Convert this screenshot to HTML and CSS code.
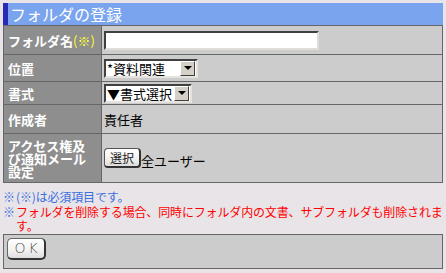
FILE: index.html
```html
<!DOCTYPE html>
<html lang="ja">
<head>
<meta charset="utf-8">
<link rel="stylesheet" href="styles.css">
</head>
<body>
<div class="page">
  <div class="title">フォルダの登録</div>
  <table class="form">
    <tr class="r1">
      <th>フォルダ名<span class="req">(※)</span></th>
      <td><span class="input"></span></td>
    </tr>
    <tr class="r2">
      <th>位置</th>
      <td><span class="select s1"><span class="val">*資料関連</span><span class="arrow"><span class="tri"></span></span></span></td>
    </tr>
    <tr class="r3">
      <th>書式</th>
      <td><span class="select s2"><span class="val">▼書式選択</span><span class="arrow"><span class="tri"></span></span></span></td>
    </tr>
    <tr class="r4">
      <th>作成者</th>
      <td class="plain">責任者</td>
    </tr>
    <tr class="r5">
      <th>アクセス権及び通知メール設定</th>
      <td><span class="access"><span class="btn">選択</span><span class="users">全ユーザー</span></span></td>
    </tr>
  </table>
  <div class="notes">
    <div class="note blue"><span class="mark">※</span><span class="text">(※)は必須項目です。</span></div>
    <div class="note"><span class="mark">※</span><span class="text red">フォルダを削除する場合、同時にフォルダ内の文書、サブフォルダも削除されます。</span></div>
  </div>
  <div class="actions"><span class="okbtn">OK</span></div>
</div>
</body>
</html>
```
FILE: styles.css
```css
html, body {
  margin: 0;
  padding: 0;
  background: #e8e4e8;
}
body {
  padding: 3px;
  font-family: "Noto Sans CJK JP", "DejaVu Sans", sans-serif;
  font-size: 12px;
  color: #000;
}
.page {
  width: 440px;
}
.title {
  height: 22px;
  line-height: 22px;
  background: #7aa4ee;
  border-left: 5px solid #2a2ab8;
  padding-left: 2px;
  color: #fff;
  font-size: 16px;
}
.form {
  width: 440px;
  border-collapse: collapse;
  border: 1px solid #666;
}
.form th, .form td {
  border: 1px solid #666;
  padding: 0;
}
.form th {
  width: 89px;
  background: #8e8e8e;
  color: #fff;
  font-size: 13px;
  font-weight: bold;
  text-align: left;
  padding: 0 4px 0 4px;
  line-height: 13px;
}
.form td {
  background: #cccccc;
  padding-left: 2px;
  vertical-align: middle;
}
.req {
  color: #ffff33;
  font-weight: normal;
}
.r1 th, .r1 td { height: 28px; }
.r2 th, .r2 td { height: 26px; }
.r3 th, .r3 td { height: 22px; }
.r4 th, .r4 td { height: 28px; }
.r5 th, .r5 td { height: 48px; }
.input {
  display: block;
  width: 211px;
  height: 15px;
  background: #fff;
  border-top: 2px solid #404040;
  border-left: 2px solid #404040;
  border-right: 2px solid #e0ddd8;
  border-bottom: 2px solid #e0ddd8;
}
.select {
  display: flex;
  align-items: center;
  height: 15px;
  background: #fff;
  border-top: 2px solid #404040;
  border-left: 2px solid #404040;
  border-right: 2px solid #e6e3de;
  border-bottom: 2px solid #e6e3de;
  font-size: 13px;
  line-height: 15px;
}
.s1 { width: 90px; }
.s2 { width: 84px; }
.select .val {
  flex: 1;
  padding-left: 1px;
  white-space: nowrap;
}
.select .arrow {
  flex: none;
  width: 15px;
  height: 15px;
  margin-right: 1px;
  background: #d4d0c8;
  border-top: 1px solid #fff;
  border-left: 1px solid #fff;
  border-right: 1px solid #404040;
  border-bottom: 1px solid #404040;
  display: flex;
  align-items: center;
  justify-content: center;
  box-sizing: border-box;
}
.tri {
  width: 0;
  height: 0;
  border-left: 4px solid transparent;
  border-right: 4px solid transparent;
  border-top: 4px solid #000;
}
.plain {
  font-size: 13px;
}
.access {
  display: flex;
  align-items: flex-end;
}
.btn {
  display: inline-block;
  width: 37px;
  height: 20px;
  box-sizing: border-box;
  border: 1px solid #555;
  border-right: 2px solid #333;
  border-bottom: 2px solid #333;
  border-radius: 4px;
  background: linear-gradient(#ffffff, #f0f0f0 60%, #dcdcdc);
  text-align: center;
  font-size: 12px;
  line-height: 17px;
  color: #222;
}
.users {
  font-size: 13px;
  line-height: 14px;
}
.notes {
  padding-top: 7px;
  line-height: 14.5px;
  font-size: 12px;
}
.note {
  display: flex;
}
.mark {
  flex: none;
  width: 13px;
  color: #3a6fe0;
}
.text {
  flex: 1;
  min-width: 0;
  letter-spacing: -0.15px;
}
.blue { color: #3a6fe0; }
.red { color: #ff0000; }
.actions {
  margin-top: 0;
  background: #cccccc;
  border: 1px solid #666;
  padding: 3px 3px;
  box-sizing: border-box;
  height: 35px;
}
.okbtn {
  display: inline-block;
  width: 39px;
  height: 22px;
  box-sizing: border-box;
  border: 1px solid #666;
  border-right: 2px solid #333;
  border-bottom: 2px solid #333;
  border-radius: 5px;
  background: linear-gradient(#ffffff, #f2f2f2 60%, #dedede);
  text-align: center;
  font-family: "DejaVu Sans", sans-serif;
  font-size: 14px;
  letter-spacing: 3px;
  padding-left: 3px;
  line-height: 19px;
  color: #555;
  font-weight: 300;
}
```
